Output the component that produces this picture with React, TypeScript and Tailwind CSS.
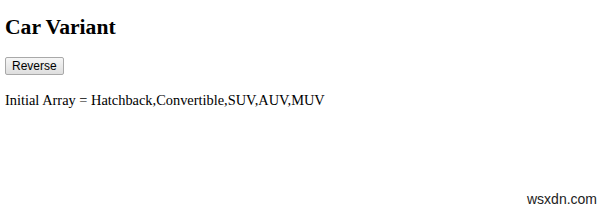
export default function App() {
  return (
    <div className="relative h-[212px] w-[600px] bg-white text-black" style={{ fontFamily: '"Liberation Serif", "Times New Roman", serif' }}>
      <div className="px-[5px] pt-[14px]">
        <h2 className="text-[21.6px] font-bold leading-[26px]">Car Variant</h2>
        <button className="mt-[17px] block h-[18px] rounded-[2px] border border-[#a9a9a9] bg-gradient-to-b from-[#f6f6f6] to-[#dedede] px-[6px] font-['Liberation_Sans',Arial,sans-serif] text-[12px] leading-[16px] text-black">
          Reverse
        </button>
        <p className="mt-[16px] text-[14.4px] leading-[18px]">Initial Array = Hatchback,Convertible,SUV,AUV,MUV</p>
      </div>
      <div className="absolute left-[527px] top-[191px] font-['Liberation_Sans',Arial,sans-serif] text-[14px] leading-[16px] text-[#222]">wsxdn.com</div>
    </div>
  )
}
